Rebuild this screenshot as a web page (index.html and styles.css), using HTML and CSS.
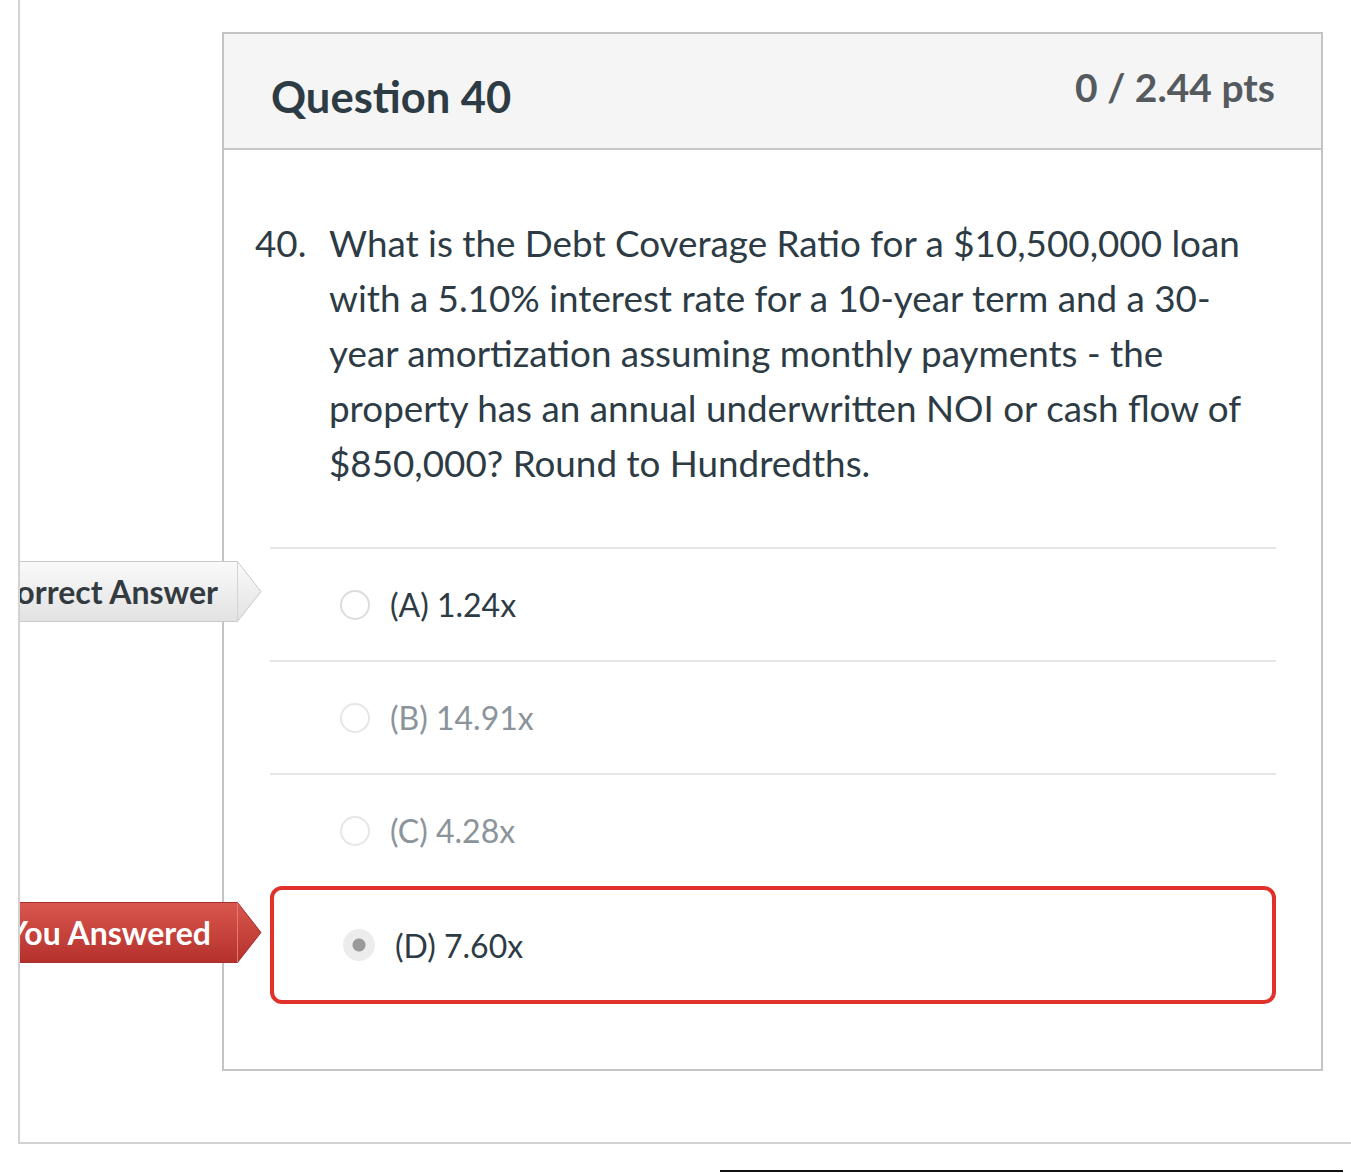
FILE: index.html
```html
<!DOCTYPE html>
<html lang="en">
<head>
<meta charset="utf-8">
<title>Question 40</title>
<link rel="stylesheet" href="styles.css">
</head>
<body>
<div class="page">
  <div class="quiz">
    <div class="question">
      <div class="q-header">
        <h2 class="q-title">Question 40</h2>
        <div class="q-pts">0 / 2.44 pts</div>
      </div>
      <div class="q-body">
        <div class="q-text">
          <span class="q-num">40.</span>
          <p class="q-para">What is the Debt Coverage Ratio for a $10,500,000 loan with a 5.10% interest rate for a 10-year term and a 30-year amortization assuming monthly payments - the property has an annual underwritten NOI or cash flow of $850,000? Round to Hundredths.</p>
        </div>
        <div class="answers">
          <div class="answer correct">
            <div class="flag flag-correct">
              <svg class="flag-shape" viewBox="0 0 272 61" preserveAspectRatio="none">
                <defs>
                  <linearGradient id="gGray" x1="0" y1="0" x2="0" y2="1">
                    <stop offset="0" stop-color="#fafafa"/>
                    <stop offset="1" stop-color="#e2e2e2"/>
                  </linearGradient>
                </defs>
                <polygon points="0.5,0.5 247.5,0.5 271,30.5 247.5,60.5 0.5,60.5" fill="url(#gGray)" stroke="#c9c9c9" stroke-width="1"/>
                <line x1="247.5" y1="1" x2="247.5" y2="60" stroke="#d4d4d4" stroke-width="1"/>
              </svg>
              <span class="flag-text">Correct Answer</span>
            </div>
            <span class="radio"></span>
            <span class="answer-text">(A) 1.24x</span>
          </div>
          <div class="answer muted">
            <span class="radio"></span>
            <span class="answer-text">(B) 14.91x</span>
          </div>
          <div class="answer muted">
            <span class="radio"></span>
            <span class="answer-text">(C) 4.28x</span>
          </div>
          <div class="answer wrong">
            <div class="flag flag-wrong">
              <svg class="flag-shape" viewBox="0 0 272 61" preserveAspectRatio="none">
                <defs>
                  <linearGradient id="gRed" x1="0" y1="0" x2="0" y2="1">
                    <stop offset="0" stop-color="#d9574f"/>
                    <stop offset="1" stop-color="#b5302b"/>
                  </linearGradient>
                </defs>
                <polygon points="0.5,0.5 247.5,0.5 271,30.5 247.5,60.5 0.5,60.5" fill="url(#gRed)" stroke="#a8302c" stroke-width="1"/>
                <line x1="247.5" y1="1" x2="247.5" y2="60" stroke="#e07a74" stroke-width="1"/>
              </svg>
              <span class="flag-text">You Answered</span>
            </div>
            <span class="radio selected"></span>
            <span class="answer-text">(D) 7.60x</span>
          </div>
        </div>
      </div>
    </div>
  </div>
  <div class="bottom-rule"></div>
</div>
</body>
</html>
```
FILE: styles.css
```css
* { box-sizing: border-box; }

html, body {
  margin: 0;
  padding: 0;
  background: #ffffff;
}

body {
  font-family: Lato, "Open Sans", "Liberation Sans", sans-serif;
  color: #2d3b45;
  overflow: hidden;
}

.page {
  width: 1351px;
  height: 1173px;
}

.quiz {
  margin-left: 18px;
  width: 1400px;
  border-left: 2px solid #d2d2d2;
  border-bottom: 2px solid #d2d2d2;
  padding: 32px 0 71px 202px;
  overflow: hidden;
}

.question {
  width: 1101px;
  border: 2px solid #c4c4c4;
  background: #ffffff;
}

.q-header {
  height: 116px;
  background: #f5f5f5;
  border-bottom: 2px solid #c8c8c8;
  display: flex;
  justify-content: space-between;
  align-items: flex-start;
  padding: 0 46px 0 47px;
}

.q-title {
  margin: 37px 0 0 0;
  font-size: 43.5px;
  line-height: 50px;
  font-weight: 700;
  color: #2d3b45;
}

.q-pts {
  margin-top: 30px;
  font-size: 39px;
  line-height: 46px;
  font-weight: 700;
  color: #555a5e;
}

.q-body {
  padding: 66px 45px 65px 31px;
}

.q-text {
  display: flex;
  align-items: flex-start;
  font-size: 36.8px;
  line-height: 55px;
  color: #2d3b45;
}

.q-num {
  flex: 0 0 74px;
}

.q-para {
  margin: 0;
  flex: 1;
}

.answers {
  margin: 56px 0 0 15px;
}

.answer {
  position: relative;
  display: flex;
  align-items: center;
  height: 113px;
  border-top: 2px solid #e6e6e6;
  padding-left: 70px;
  font-size: 32px;
  color: #2d3b45;
}

.answer.muted {
  color: #8b949b;
}

.answer.wrong {
  height: 118px;
  border: 4px solid #e0322b;
  border-radius: 12px;
  padding-left: 69px;
}

.radio {
  width: 30px;
  height: 30px;
  border-radius: 50%;
  border: 2px solid #dcdcdc;
  background: #ffffff;
  margin-right: 20px;
  flex: 0 0 auto;
}

.answer.muted .radio {
  border-color: #e6e6e6;
}

.radio.selected {
  width: 32px;
  height: 32px;
  border: none;
  background: radial-gradient(circle, #9a9a9a 0 6px, #ececec 7px);
  margin-right: 20px;
}

.flag {
  position: absolute;
  left: -280px;
  width: 272px;
  height: 61px;
  display: flex;
  align-items: center;
  justify-content: flex-end;
  padding-right: 44px;
  z-index: 2;
}

.flag-correct {
  top: 12px;
}

.flag-wrong {
  top: 12px;
  left: -284px;
  padding-right: 51px;
}

.flag-shape {
  position: absolute;
  left: 0;
  top: 0;
  width: 100%;
  height: 100%;
}

.flag-text {
  position: relative;
  font-size: 32px;
  font-weight: 700;
  white-space: nowrap;
  line-height: 1;
}

.flag-correct .flag-text {
  color: #333b40;
}

.flag-wrong .flag-text {
  color: #ffffff;
}

.bottom-rule {
  margin: 26px 0 0 720px;
  width: 623px;
  border-top: 2px solid #111111;
}
```
